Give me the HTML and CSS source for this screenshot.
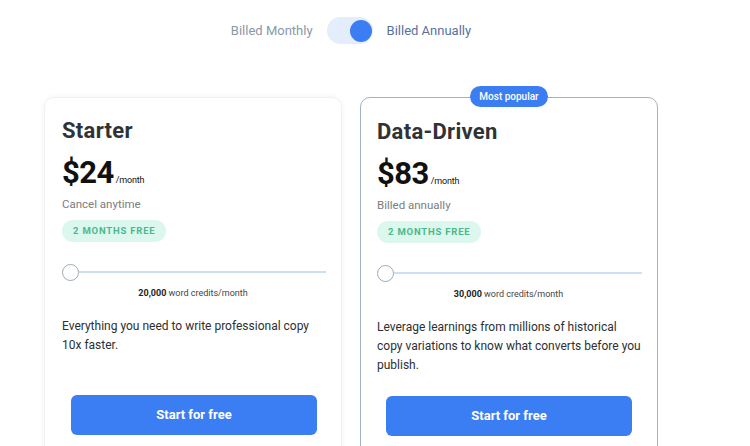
FILE: index.html
```html
<!DOCTYPE html>
<html lang="en">
<head>
    <meta charset="utf-8">
    <title>Pricing</title>
    <link rel="stylesheet" href="styles.css">
</head>
<body>
    <div class="page">
        <div class="billing">
            <span class="billing-label">Billed Monthly</span>
            <span class="switch"><span class="knob"></span></span>
            <span class="billing-label active">Billed Annually</span>
        </div>

        <div class="plans">
            <div class="plan">
                <h2 class="plan-name">Starter</h2>
                <div class="price"><span class="amount">$24</span><span class="per">/month</span></div>
                <div class="note">Cancel anytime</div>
                <span class="promo">2 MONTHS FREE</span>
                <div class="slider"><span class="thumb"></span><span class="track"></span></div>
                <div class="credits"><strong>20,000</strong> word credits/month</div>
                <p class="desc">Everything you need to write professional copy 10x faster.</p>
                <a class="cta" href="#">Start for free</a>
            </div>

            <div class="plan featured">
                <span class="ribbon">Most popular</span>
                <h2 class="plan-name">Data-Driven</h2>
                <div class="price"><span class="amount">$83</span><span class="per">/month</span></div>
                <div class="note">Billed annually</div>
                <span class="promo">2 MONTHS FREE</span>
                <div class="slider"><span class="thumb"></span><span class="track"></span></div>
                <div class="credits"><strong>30,000</strong> word credits/month</div>
                <p class="desc">Leverage learnings from millions of historical copy variations to know what converts before you publish.</p>
                <a class="cta" href="#">Start for free</a>
            </div>
        </div>
    </div>
</body>
</html>
```

FILE: styles.css
```css
html {
    height: 100%;
}
body {
    margin: 0;
    padding: 0;
    background: #ffffff;
    color: #333;
    font-family: Roboto, "Liberation Sans", sans-serif;
    font-size: 12px;
    overflow: hidden;
}
.page {
    width: 614px;
    margin-left: 44px;
}
.billing {
    display: flex;
    align-items: center;
    justify-content: center;
    gap: 14px;
    padding-top: 17px;
    height: 27px;
}
.billing-label {
    font-size: 13px;
    color: #8d97a8;
}
.billing-label.active {
    color: #56739f;
}
.switch {
    display: flex;
    align-items: center;
    justify-content: flex-end;
    width: 46px;
    height: 27px;
    padding-right: 1px;
    box-sizing: border-box;
    border-radius: 14px;
    background: #e4edfb;
}
.knob {
    width: 22px;
    height: 22px;
    border-radius: 50%;
    background: #3b7df2;
}
.plans {
    display: flex;
    gap: 18px;
    margin-top: 53px;
}
.plan {
    position: relative;
    display: flex;
    flex-direction: column;
    align-items: flex-start;
    width: 298px;
    height: 380px;
    box-sizing: border-box;
    padding: 19px 17px 0;
    border: 1px solid #f0f1f3;
    border-radius: 10px;
    box-shadow: 0 0 6px rgba(0, 0, 0, 0.05);
}
.plan.featured {
    border-color: #9fb2c6;
    box-shadow: none;
    padding: 20px 17px 0 16px;
}
.ribbon {
    position: absolute;
    top: -12px;
    left: 50%;
    transform: translateX(-50%);
    width: 78px;
    height: 21px;
    line-height: 21px;
    border-radius: 11px;
    background: #3b7df2;
    color: #fff;
    font-size: 10px;
    font-weight: 500;
    text-align: center;
}
.plan-name {
    margin: 0;
    font-size: 22px;
    line-height: 28px;
    font-weight: 700;
    color: #2f3338;
    letter-spacing: 0.3px;
}
.price {
    margin-top: 10px;
    display: flex;
    align-items: baseline;
    line-height: 36px;
    color: #111;
}
.amount {
    font-size: 31px;
    font-weight: 700;
    letter-spacing: -0.5px;
}
.per {
    margin-left: 2px;
    font-size: 9px;
    letter-spacing: -0.2px;
}
.note {
    margin-top: -2px;
    line-height: 16px;
    font-size: 11.5px;
    color: #7a7d82;
}
.promo {
    margin-top: 8px;
    height: 22px;
    line-height: 22px;
    padding: 0 11px;
    border-radius: 11px;
    background: #dcf7ee;
    color: #49b98b;
    font-size: 9.5px;
    font-weight: 700;
    letter-spacing: 0.8px;
}
.slider {
    display: flex;
    align-items: center;
    align-self: stretch;
    margin-top: 21px;
    margin-right: -2px;
    height: 18px;
}
.thumb {
    width: 15px;
    height: 15px;
    border: 1.5px solid #9aaabb;
    border-radius: 50%;
    background: #fff;
}
.track {
    flex: 1;
    height: 2px;
    background: #cddff0;
}
.credits {
    align-self: stretch;
    margin-top: 6px;
    line-height: 12px;
    font-size: 9px;
    color: #444;
    text-align: center;
}
.credits strong {
    color: #222;
}
.desc {
    margin: 18px -5px 0 0;
    min-height: 60px;
    line-height: 19px;
    font-size: 12px;
    color: #2c2f33;
}
.cta {
    display: block;
    margin: 18px 0 0 9px;
    width: 246px;
    height: 40px;
    line-height: 40px;
    border-radius: 6px;
    background: #3b7df2;
    color: #fff;
    font-size: 13px;
    font-weight: 700;
    text-align: center;
    text-decoration: none;
}
```
